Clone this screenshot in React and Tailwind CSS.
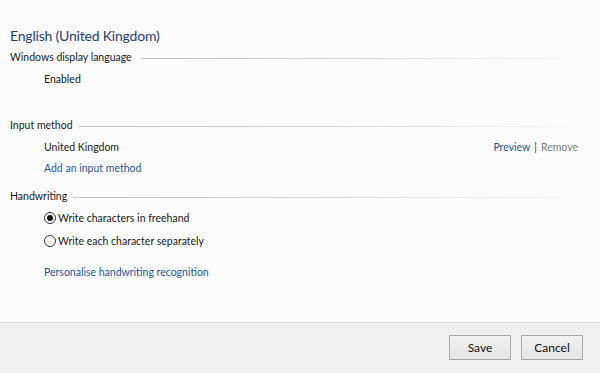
export default function App() {
  return (
    <div className="w-[600px] h-[373px] flex flex-col bg-[#fcfcfc] text-[#1a1a1a] overflow-hidden font-['Lato',sans-serif]">
      <div className="flex-1 pl-[10px] pr-[18px] pt-[26px]">
        <h1 className="text-[14px] leading-[20px] text-[#1f3d78] tracking-[-0.2px]">English (United Kingdom)</h1>

        {/* display language */}
        <div className="mt-[4px] flex items-center gap-[8px] h-[16px]">
          <span className="text-[10.5px] whitespace-nowrap">Windows display language</span>
          <div className="flex-1 h-px bg-gradient-to-r from-[#c8c8c8] via-[#d4d4d4] to-transparent" />
        </div>
        <div className="pl-[34px] mt-[5px] text-[10.5px] leading-[16px]">Enabled</div>

        {/* input method */}
        <div className="mt-[31px] flex items-center gap-[6px] h-[16px]">
          <span className="text-[10.5px] whitespace-nowrap">Input method</span>
          <div className="flex-1 h-px bg-gradient-to-r from-[#c8c8c8] via-[#d4d4d4] to-transparent" />
        </div>
        <div className="pl-[34px] mt-[5px] flex items-center justify-between text-[10.5px] leading-[16px]">
          <span>United Kingdom</span>
          <span className="pr-[4px]">
            <a className="text-[#1d5796]">Preview</a>
            <span className="mx-[4px] text-[#333]">|</span>
            <a className="text-[#7d7d7d]">Remove</a>
          </span>
        </div>
        <div className="pl-[34px] mt-[5px] text-[10.5px] leading-[16px] text-[#1d5796]">Add an input method</div>

        {/* handwriting */}
        <div className="mt-[13px] flex items-center gap-[6px] h-[16px]">
          <span className="text-[10.5px] whitespace-nowrap">Handwriting</span>
          <div className="flex-1 h-px bg-gradient-to-r from-[#c8c8c8] via-[#d4d4d4] to-transparent" />
        </div>
        <div className="pl-[34px] mt-[5px] flex flex-col gap-[7px] text-[10.5px] leading-[16px]">
          <label className="flex items-center gap-[2px]">
            <span className="w-[12px] h-[12px] rounded-full border border-[#333] bg-white flex items-center justify-center">
              <span className="w-[6px] h-[6px] rounded-full bg-[#111]" />
            </span>
            <span>Write characters in freehand</span>
          </label>
          <label className="flex items-center gap-[2px]">
            <span className="w-[12px] h-[12px] rounded-full border border-[#333] bg-white" />
            <span>Write each character separately</span>
          </label>
        </div>
        <div className="pl-[34px] mt-[15px] text-[10.5px] leading-[16px] text-[#1d5796]">
          Personalise handwriting recognition
        </div>
      </div>

      {/* footer */}
      <div className="h-[51px] shrink-0 border-t border-[#d6d6d6] bg-[#efefef] flex items-start justify-end gap-[10px] pt-[12px] pr-[17px]">
        <button className="w-[62px] h-[25px] border border-[#a9a9a9] bg-gradient-to-b from-[#f2f2f2] to-[#e3e3e3] text-[12px] text-[#111]">
          Save
        </button>
        <button className="w-[62px] h-[25px] border border-[#a9a9a9] bg-gradient-to-b from-[#f2f2f2] to-[#e3e3e3] text-[12px] text-[#111]">
          Cancel
        </button>
      </div>
    </div>
  );
}
